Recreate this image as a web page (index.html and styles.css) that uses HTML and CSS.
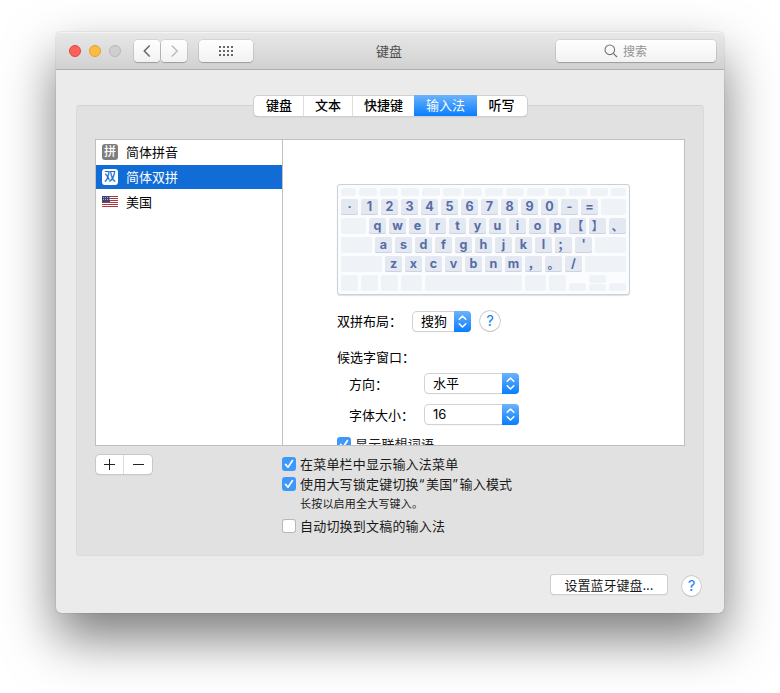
FILE: index.html
```html
<!DOCTYPE html>
<html lang="zh-CN">
<head>
<meta charset="utf-8">
<title>键盘</title>
<link rel="stylesheet" href="styles.css">
</head>
<body>
<svg class="defs" width="0" height="0">
  <symbol id="tick" viewBox="0 0 14 14"><path d="M3.6 7.4 6 10.2 10.5 3.6" fill="none" stroke="#fff" stroke-width="1.7" stroke-linecap="round" stroke-linejoin="round"/></symbol>
  <symbol id="updown" viewBox="0 0 17 21"><path d="M5.2 8.2 8.5 5 11.8 8.2M5.2 12.8 8.5 16 11.8 12.8" fill="none" stroke="#fff" stroke-width="1.5" stroke-linecap="round" stroke-linejoin="round"/></symbol>
</svg>
<main class="window">
  <header class="titlebar">
    <div class="lights"><i class="light red"></i><i class="light yellow"></i><i class="light off"></i></div>
    <div class="nav">
      <button class="tool"><svg width="26" height="22" viewBox="0 0 26 22"><path d="M15.7 5.5 10.3 11 15.7 16.5" fill="none" stroke="#666" stroke-width="1.5"/></svg></button>
      <button class="tool"><svg width="26" height="22" viewBox="0 0 26 22"><path d="M10.8 5.5 16.2 11 10.8 16.5" fill="none" stroke="#bdbdbd" stroke-width="1.5"/></svg></button>
    </div>
    <button class="tool all"><svg width="14" height="10" viewBox="0 0 14 10" shape-rendering="crispEdges"><path d="M0 1H14M0 5H14M0 9H14" stroke="#666" stroke-width="2" stroke-dasharray="2 2"/></svg></button>
    <h1 class="title">键盘</h1>
    <div class="search"><svg width="14" height="14" viewBox="0 0 14 14"><circle cx="5.8" cy="5.8" r="4.8" fill="none" stroke="#737373" stroke-width="1.1"/><path d="M9.3 9.3 13 13" stroke="#737373" stroke-width="1.2"/></svg><span>搜索</span></div>
  </header>
  <nav class="tabs">
    <span class="tab t1">键盘</span><span class="tab t2">文本</span><span class="tab t3">快捷键</span><span class="tab t4 active">输入法</span><span class="tab t5">听写</span>
  </nav>
  <section class="group">
    <div class="panes">
      <ul class="sources">
        <li class="first"><b class="badge">拼</b>简体拼音</li>
        <li class="selected"><b class="badge">双</b>简体双拼</li>
        <li><svg class="flag" width="16" height="11" viewBox="0 0 16 11" shape-rendering="crispEdges"><path fill="#fff" d="M0 0h16v11H0z"/><path d="M0 .5H16M0 2.5H16M0 4.5H16M0 6.5H16M0 8.5H16M0 10.5H16" stroke="#a83a43"/><path fill="#3f4475" d="M0 0h8v6H0z"/><path d="M1 1.5H8M1 3.5H8" stroke="#a9abc8" stroke-dasharray="1 1"/></svg>美国</li>
      </ul>
      <div class="detail">
        <div class="keyboard">
          <div class="row fn"><i class="w15"></i><i></i><i></i><i></i><i></i><i></i><i></i><i></i><i></i><i></i><i></i><i></i><i></i><i class="w15"></i></div>
          <div class="row"><kbd>·</kbd><kbd>1</kbd><kbd>2</kbd><kbd>3</kbd><kbd>4</kbd><kbd>5</kbd><kbd>6</kbd><kbd>7</kbd><kbd>8</kbd><kbd>9</kbd><kbd>0</kbd><kbd>-</kbd><kbd>=</kbd><i class="fill"></i></div>
          <div class="row"><i class="fill"></i><kbd>q</kbd><kbd>w</kbd><kbd>e</kbd><kbd>r</kbd><kbd>t</kbd><kbd>y</kbd><kbd>u</kbd><kbd>i</kbd><kbd>o</kbd><kbd>p</kbd><kbd class="wide">【</kbd><kbd class="wide">】</kbd><kbd class="wide">、</kbd></div>
          <div class="row"><i class="fill"></i><kbd>a</kbd><kbd>s</kbd><kbd>d</kbd><kbd>f</kbd><kbd>g</kbd><kbd>h</kbd><kbd>j</kbd><kbd>k</kbd><kbd>l</kbd><kbd class="wide">；</kbd><kbd>'</kbd><i class="fill"></i></div>
          <div class="row"><i class="fill"></i><kbd>z</kbd><kbd>x</kbd><kbd>c</kbd><kbd>v</kbd><kbd>b</kbd><kbd>n</kbd><kbd>m</kbd><kbd class="wide">，</kbd><kbd class="wide">。</kbd><kbd>/</kbd><i class="fill"></i></div>
          <div class="row"><i class="w17"></i><i class="w17"></i><i class="w17"></i><i class="w21"></i><i class="fill"></i><i class="w21"></i><i class="w17"></i><i class="w17 half"></i><span class="w17 pair"><i></i><i></i></span><i class="w17 half"></i></div>
        </div>
        <div class="field layout"><label>双拼布局：</label><div class="select small"><span>搜狗</span><svg class="arrows"><use href="#updown"/></svg></div><button class="help">?</button></div>
        <h2 class="heading">候选字窗口：</h2>
        <div class="field direction"><label>方向：</label><div class="select"><span>水平</span><svg class="arrows"><use href="#updown"/></svg></div></div>
        <div class="field size"><label>字体大小：</label><div class="select"><span class="num">16</span><svg class="arrows"><use href="#updown"/></svg></div></div>
        <div class="check suggest"><svg class="box on"><use href="#tick"/></svg>显示联想词语</div>
      </div>
    </div>
    <div class="below">
      <div class="addremove"><button><svg width="11" height="11" viewBox="0 0 11 11" shape-rendering="crispEdges"><path d="M0 5.5H11M5.5 0V11" stroke="#222"/></svg></button><button><svg width="11" height="11" viewBox="0 0 11 11" shape-rendering="crispEdges"><path d="M0 5.5H11" stroke="#222"/></svg></button></div>
      <div class="options">
        <div class="check"><svg class="box on"><use href="#tick"/></svg>在菜单栏中显示输入法菜单</div>
        <div class="check"><svg class="box on"><use href="#tick"/></svg><span>使用大写锁定键切换<q>“</q>美国<q>”</q>输入模式</span></div>
        <p class="hint">长按以启用全大写键入。</p>
        <div class="check"><span class="box"></span>自动切换到文稿的输入法</div>
      </div>
    </div>
  </section>
  <footer class="footer"><button class="bluetooth">设置蓝牙键盘...</button><button class="help">?</button></footer>
</main>
</body>
</html>
```
FILE: styles.css
```css
* { box-sizing: border-box; }
html { background: #fff; }
body {
  margin: 0;
  padding: 32px 56px 0;
  height: 693px;
  overflow: hidden;
  font: 13px/20px Inter, "Noto Sans CJK SC", sans-serif;
  color: #1a1a1a;
}
button {
  margin: 0;
  padding: 0;
  border: 0;
  font: inherit;
  color: inherit;
}
.defs { position: absolute; }
.window {
  width: 668px;
  height: 581px;
  border-radius: 5px;
  background: #ebebeb;
  box-shadow: 0 0 1px rgba(0, 0, 0, .5), 0 25px 52px rgba(0, 0, 0, .52);
}

/* Title bar */
.titlebar {
  display: flex;
  align-items: flex-start;
  height: 38px;
  padding: 8px 8px 0 13px;
  border-radius: 5px 5px 0 0;
  border-bottom: 1px solid #b0b0b0;
  background: linear-gradient(#e8e8e8, #d1d1d1);
  box-shadow: inset 0 1px #f4f4f4;
}
.lights { display: flex; gap: 8px; padding-top: 5px; width: 65px; }
.light { width: 12px; height: 12px; border-radius: 50%; border: 1px solid; }
.red { background: #fc605b; border-color: #e2443f; }
.yellow { background: #fdbc40; border-color: #dea034; }
.off { background: #cfcfcf; border-color: #b9b9b9; }
.nav { display: flex; gap: 1px; width: 65px; }
.tool {
  display: flex;
  align-items: center;
  justify-content: center;
  width: 26px;
  height: 22px;
  border-radius: 4px;
  background: linear-gradient(#fefefe, #f2f2f2);
  box-shadow: 0 0 0 .6px rgba(0, 0, 0, .13), 0 1px 1px rgba(0, 0, 0, .22);
}
.all { width: 54px; }
.title {
  width: 303px;
  margin: 0;
  padding: 1px 0 0 123px;
  font-size: 13px;
  font-weight: 400;
  color: #4d4d4d;
}
.search {
  display: flex;
  align-items: center;
  gap: 5px;
  width: 160px;
  height: 22px;
  padding-left: 48px;
  border-radius: 4px;
  background: linear-gradient(#fefefe, #f2f2f2);
  box-shadow: 0 0 0 .6px rgba(0, 0, 0, .13), 0 1px 1px rgba(0, 0, 0, .22);
  font-size: 12px;
  color: #939393;
}
.search span { padding-top: 1px; }

/* Tabs sit across the top edge of the group box */
.tabs {
  position: relative;
  z-index: 1;
  display: flex;
  width: 273px;
  height: 20px;
  margin: 26px 0 -11px 198px;
  border-radius: 4px;
  background: #fff;
  box-shadow: 0 0 0 1px #cfcfcf, 0 1px 1px rgba(0, 0, 0, .3);
  color: #000;
  font-weight: 500;
}
.tab { text-align: center; line-height: 19px; border-right: 1px solid #dedede; }
.t1 { width: 50px; padding-left: 1px; }
.t2 { width: 49px; }
.t3 { width: 61px; border: 0; }
.t4 { width: 63px; border: 0; }
.t5 { width: 50px; border: 0; padding-right: 1px; }
.active {
  height: 21px;
  margin-top: -1px;
  line-height: 21px;
  color: #fff;
  font-weight: 400;
  background: linear-gradient(#6cb3fa, #087eff);
}
.group {
  width: 628px;
  height: 451px;
  margin-left: 20px;
  padding: 33px 18px 0;
  border: 1px solid #dadada;
  border-top-color: #d2d2d2;
  border-radius: 4px;
  background: #e1e1e1;
}
.panes {
  display: flex;
  width: 590px;
  height: 307px;
  border: 1px solid #bfbfbf;
  background: #fff;
  overflow: hidden;
}
.sources {
  width: 187px;
  margin: 0;
  padding: 0;
  border-right: 1px solid #bfbfbf;
  list-style: none;
  color: #000;
}
.sources li {
  display: flex;
  align-items: center;
  gap: 8px;
  height: 25px;
  padding-left: 6px;
}
.sources .first { padding-bottom: 1px; }
.sources .selected { height: 24px; background: #116cd6; color: #fff; }
.badge {
  width: 16px;
  height: 16px;
  border-radius: 3px;
  background: #7f7f7f;
  color: #fff;
  font-size: 12px;
  font-weight: 500;
  line-height: 15px;
  text-align: center;
}
.selected .badge { background: #fff; color: #116cd6; }
.detail { width: 401px; padding: 44px 0 0 54px; }

/* Keyboard preview */
.keyboard {
  display: flex;
  flex-direction: column;
  gap: 3px;
  width: 293px;
  height: 111px;
  padding: 3px;
  border: 1px solid #cbd0d7;
  border-radius: 3px;
  background: #fafcfe;
  box-shadow: 0 1px 1px rgba(0, 0, 0, .12);
}
.row { display: flex; gap: 3px; height: 16px; }
.row i { display: block; border-radius: 2px; background: #eff2f7; }
.fn { height: 8px; }
.fn i { width: 18px; }
.fn .w15, .w15 { width: 15px; }
.w17 { width: 17px; }
.w21 { width: 21px; }
.fill { flex: 1; }
.half { height: 8px; margin-top: 8px; }
.pair { display: flex; flex-direction: column; gap: 1px; }
.pair i { flex: 1; }
kbd {
  display: flex;
  justify-content: center;
  width: 17px;
  height: 16px;
  border-radius: 2px;
  background: #e3e8f1;
  box-shadow: inset 0 -1px #cbd3e2;
  color: #566da5;
  font: 700 12.5px/15px Inter, "Noto Sans CJK SC", sans-serif;
}
.wide { font-family: "Noto Sans CJK SC", sans-serif; font-size: 12px; }

/* Form */
.field { display: flex; align-items: center; height: 21px; color: #000; }
.select {
  display: flex;
  justify-content: space-between;
  width: 93px;
  height: 19px;
  padding-left: 8px;
  border-radius: 4px;
  background: #fff;
  box-shadow: 0 0 0 1px #d2d2d2, 0 1px 1px rgba(0, 0, 0, .25);
  line-height: 19px;
}
.small { width: 57px; }
.num { font-size: 13px; }
.arrows {
  width: 17px;
  height: 21px;
  margin: -1px -1px 0 0;
  border-radius: 0 4px 4px 0;
  background: linear-gradient(#6cb3fa, #087eff);
}
.layout { margin-top: 16px; }
.layout label { width: 76px; padding-bottom: 2px; }
.help {
  width: 20px;
  height: 20px;
  border-radius: 50%;
  background: #fff;
  box-shadow: 0 0 0 .7px #c4c4c4, 0 1px 1px rgba(0, 0, 0, .2);
  color: #1a83f7;
  font-size: 15px;
  font-weight: 400;
  text-align: center;
}
.layout .help { margin: -1px 0 0 10px; }
.heading { margin: 15px 0 0; font-size: 13px; font-weight: 400; line-height: 20px; color: #000; }
.direction { margin: 6px 0 0 12px; }
.size { margin: 10px 0 0 12px; }
.direction label, .size label { width: 76px; }
.check { display: flex; align-items: center; gap: 4px; height: 20px; letter-spacing: .2px; }
.box {
  flex: none;
  width: 12px;
  height: 12px;
  margin: 0 1px;
  border-radius: 2px;
  background: #fff;
  box-shadow: 0 0 0 1px #b8b8b8;
}
.box.on { width: 14px; height: 14px; margin: 0; border-radius: 3px; background: #3d98fb; box-shadow: none; }
.suggest { margin-top: 9px; }
.below { display: flex; }
.addremove {
  display: flex;
  width: 56px;
  height: 19px;
  margin: 9px 0 0 1px;
  border-radius: 4px;
  background: #fff;
  box-shadow: 0 0 0 1px #c8c8c8, 0 1px 1px rgba(0, 0, 0, .25);
}
.addremove button { display: flex; width: 27px; align-items: center; justify-content: center; background: none; }
.addremove button + button { width: 29px; border-left: 1px solid #dcdcdc; }
.options { margin: 8px 0 0 130px; }
.options q { quotes: none; letter-spacing: 1.4px; }
.hint { margin: 0 0 0 18px; height: 22px; font-size: 11px; line-height: 20px; letter-spacing: .2px; }
.footer { display: flex; gap: 15px; margin: 19px 0 0 495px; }
.bluetooth {
  width: 116px;
  height: 19px;
  border-radius: 3px;
  background: #fff;
  box-shadow: 0 0 0 1px #cfcfcf, 0 1px 1px rgba(0, 0, 0, .3);
  line-height: 18px;
}
.footer .help { width: 19px; margin-top: 1px; }
```
